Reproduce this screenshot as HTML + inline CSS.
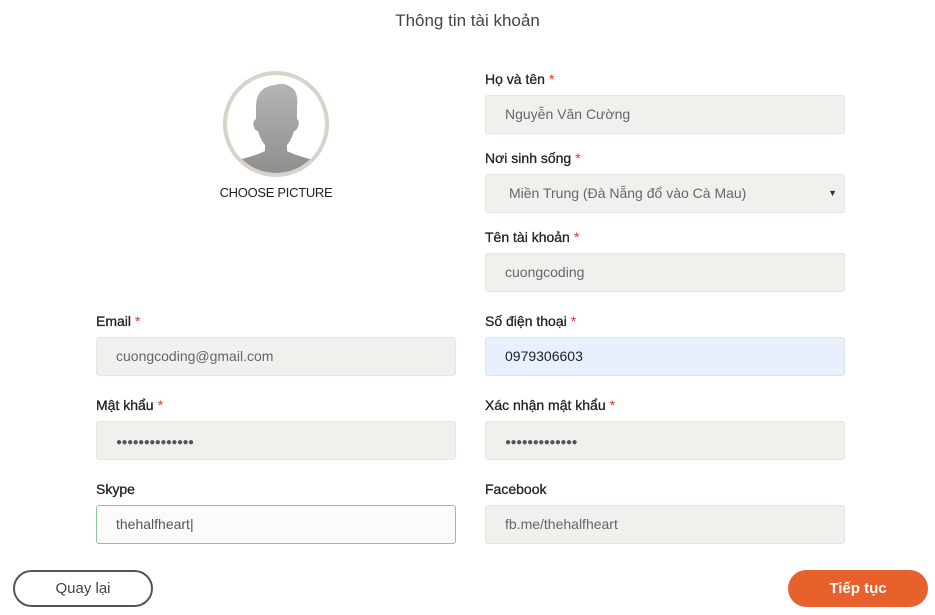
<!DOCTYPE html>
<html><head><meta charset="utf-8"><style>
*{box-sizing:border-box;margin:0;padding:0}
body{width:935px;height:615px;background:#fff;font-family:"Liberation Sans",sans-serif;color:#333;position:relative;overflow:hidden}
.t{position:absolute;top:11px;left:0;width:935px;text-align:center;font-size:17px;color:#444}
.l{position:absolute;font-size:14px;color:#222;-webkit-text-stroke:0.3px #222}
.l i{color:#e0352b;font-style:normal;margin-left:4px;-webkit-text-stroke:0}
.f{position:absolute;height:39px;background:#f1f0ed;border:1px solid #e6e4df;border-radius:3px;font-size:14px;color:#666;padding-left:19px;line-height:37px;width:360px}
.b{position:absolute;top:570px;width:140px;height:37px;border-radius:19px;text-align:center;font-size:15px}
.d{font-size:10px;letter-spacing:-0.5px;color:#555}
</style></head><body>
<div class="t">Thông tin tài khoản</div>
<div style="position:absolute;left:223px;top:71px;width:106px;height:106px;border-radius:50%;border:4px solid #d9d3cb;background:#fff;overflow:hidden">
<svg width="98" height="98" viewBox="0 0 98 98"><defs><linearGradient id="g" x1="0" y1="0" x2="0" y2="1"><stop offset="0" stop-color="#b5b5b5"/><stop offset="1" stop-color="#8f8f8f"/></linearGradient></defs>
<path d="M29 34 Q28 12 48 10 Q56 7 62 11 Q72 15 70 32 L70 44 Q73 46 71 52 Q69 56 67 56 Q64 66 60 70 L60 76 Q72 82 92 86 L98 98 L0 98 L6 86 Q26 82 38 76 L38 70 Q34 66 31 56 Q28 56 27 52 Q25 46 29 44 Z" fill="url(#g)"/></svg></div>
<div style="position:absolute;left:200px;top:185px;width:152px;text-align:center;font-size:13px;color:#222;letter-spacing:-0.3px">CHOOSE PICTURE</div>

<div class="l" style="left:485px;top:71px">Họ và tên<i>*</i></div>
<div class="f" style="left:485px;top:95px">Nguyễn Văn Cường</div>
<div class="l" style="left:485px;top:150px">Nơi sinh sống<i>*</i></div>
<div class="f" style="left:485px;top:174px;padding-left:23px">Miền Trung (Đà Nẵng đổ vào Cà Mau)<span style="position:absolute;right:7px;font-size:9px;color:#333">▼</span></div>
<div class="l" style="left:485px;top:229px">Tên tài khoản<i>*</i></div>
<div class="f" style="left:485px;top:253px">cuongcoding</div>

<div class="l" style="left:96px;top:313px">Email<i>*</i></div>
<div class="f" style="left:96px;top:337px">cuongcoding@gmail.com</div>
<div class="l" style="left:485px;top:313px">Số điện thoại<i>*</i></div>
<div class="f" style="left:485px;top:337px;background:#e8f0fe;border-color:#dbe3f0;color:#222">0979306603</div>

<div class="l" style="left:96px;top:397px">Mật khẩu<i>*</i></div>
<div class="f" style="left:96px;top:421px"><span class="d">●●●●●●●●●●●●●●</span></div>
<div class="l" style="left:485px;top:397px">Xác nhận mật khẩu<i>*</i></div>
<div class="f" style="left:485px;top:421px"><span class="d">●●●●●●●●●●●●●</span></div>

<div class="l" style="left:96px;top:481px">Skype</div>
<div class="f" style="left:96px;top:505px;background:#fbfbf9;border-color:#8fc3a0;color:#555">thehalfheart|</div>
<div class="l" style="left:485px;top:481px">Facebook</div>
<div class="f" style="left:485px;top:505px">fb.me/thehalfheart</div>

<div class="b" style="left:13px;border:2px solid #555;color:#444;line-height:33px">Quay lại</div>
<div class="b" style="left:788px;background:#e8602c;color:#fff;font-weight:bold;line-height:37px">Tiếp tục</div>
</body></html>
